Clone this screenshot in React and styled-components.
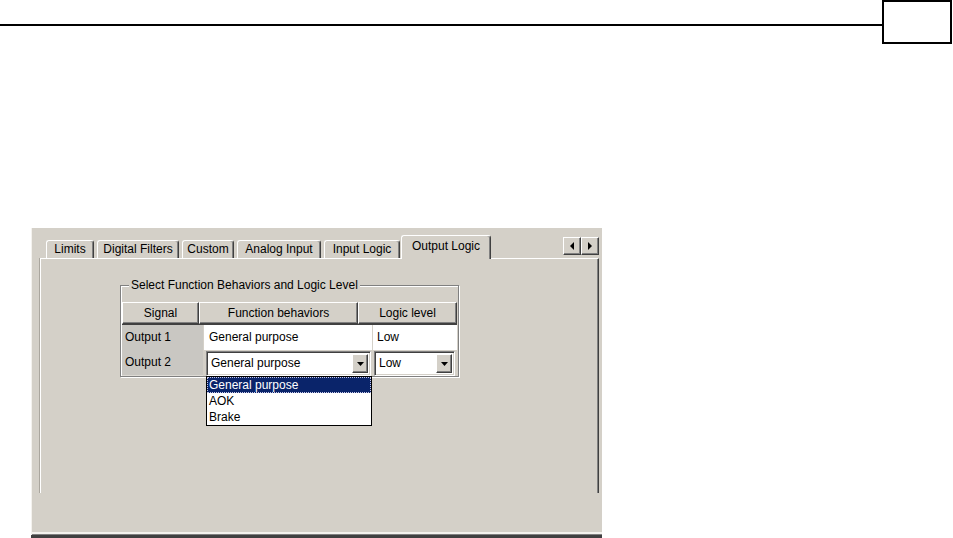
import React from "react";
import styled, { createGlobalStyle } from "styled-components";

const Global = createGlobalStyle`
  html, body { margin: 0; padding: 0; background: #fff; }
  body {
    font-family: "Liberation Sans", Arial, sans-serif;
    font-size: 12px;
    color: #000;
  }
`;

const Page = styled.div`
  width: 953px;
  height: 538px;
  overflow: hidden;
`;

const TopRule = styled.div`
  display: flex;
  align-items: flex-start;
  height: 44px;
`;

const Rule = styled.div`
  flex: 1;
  margin-top: 24px;
  border-top: 2px solid #000;
`;

const CornerBox = styled.div`
  width: 70px;
  height: 44px;
  box-sizing: border-box;
  border: 2px solid #000;
  margin-right: 1px;
`;

const Shot = styled.div`
  margin: 184px 0 0 31px;
  width: 571px;
  height: 310px;
  box-sizing: border-box;
  background: #d4d0c8;
  display: flex;
  flex-direction: column;
  border-bottom: 3px solid #404040;
  box-shadow: inset 1px 0 0 #f4f2ee, inset 0 -1px 0 #808080, inset 0 -3px 0 #f4f2ee;
`;

const TabStrip = styled.div`
  height: 30px;
  flex: none;
  display: flex;
  align-items: flex-end;
  gap: 3px;
  padding: 0 3px 0 15px;
`;

const Tab = styled.div`
  box-sizing: border-box;
  width: ${(p) => p.$w}px;
  height: ${(p) => (p.$active ? 24 : 18)}px;
  margin: ${(p) => (p.$active ? "0 -2px" : "0")};
  position: relative;
  top: ${(p) => (p.$active ? 1 : 0)}px;
  z-index: ${(p) => (p.$active ? 2 : 1)};
  background: #d4d0c8;
  border-top: 1px solid #fff;
  border-left: 1px solid #fff;
  border-right: 1px solid #404040;
  box-shadow: inset -1px 0 0 #808080;
  border-radius: 3px 3px 0 0;
  text-align: center;
  line-height: ${(p) => (p.$active ? 21 : 17)}px;
  white-space: nowrap;
`;

const ArrowGroup = styled.div`
  margin-left: auto;
  align-self: flex-start;
  margin-top: 9px;
  display: flex;
`;

const ArrowButton = styled.div`
  box-sizing: border-box;
  width: 18px;
  height: 18px;
  background: #d4d0c8;
  border-top: 1px solid #fff;
  border-left: 1px solid #fff;
  border-right: 1px solid #404040;
  border-bottom: 1px solid #404040;
  box-shadow: inset -1px -1px 0 #808080;
  display: flex;
  align-items: center;
  justify-content: center;
`;

const TabPage = styled.div`
  height: 235px;
  flex: none;
  box-sizing: border-box;
  margin: 0 3px 0 9px;
  border-top: 1px solid #fff;
  border-left: 1px solid #fff;
  border-right: 1px solid #404040;
  box-shadow: inset -1px 0 0 #808080, -1px 0 0 #aaa69e;
  padding: 26px 0 0 79px;
`;

const GroupBox = styled.div`
  position: relative;
  width: 339px;
  box-sizing: border-box;
  border: 1px solid #808080;
  box-shadow: 1px 1px 0 #fff, inset 1px 1px 0 #fff;
  padding: 16px 1px 1px 1px;
`;

const GroupTitle = styled.span`
  position: absolute;
  top: -8px;
  left: 8px;
  padding: 0 2px;
  background: #d4d0c8;
  line-height: 15px;
  white-space: nowrap;
`;

const HeaderRow = styled.div`
  display: grid;
  grid-template-columns: 77px 159px 99px;
  border-bottom: 1px solid #404040;
`;

const HeaderCell = styled.div`
  box-sizing: border-box;
  height: 22px;
  background: #d4d0c8;
  border-top: 1px solid #fff;
  border-left: 1px solid #fff;
  border-right: 1px solid #404040;
  border-bottom: 1px solid #404040;
  box-shadow: inset -1px -1px 0 #808080;
  text-align: center;
  line-height: 20px;
`;

const BodyRow = styled.div`
  display: grid;
  grid-template-columns: 81px 169px 85px;
  height: 25px;
`;

const SignalCell = styled.div`
  background: #c9c7c2;
  border-bottom: 1px solid #dedbd5;
  padding-left: 3px;
  line-height: 25px;
`;

const ValueCell = styled.div`
  background: #fff;
  border-left: 1px solid #d4d0c8;
  border-bottom: 1px solid #d4d0c8;
  padding-left: ${(p) => p.$pad}px;
  line-height: 25px;
`;

const EditCell = styled.div`
  position: relative;
  box-sizing: border-box;
  background: #d4d0c8;
  padding: ${(p) => p.$pad};
  display: flex;
`;

const Combo = styled.div`
  flex: 1;
  box-sizing: border-box;
  display: flex;
  align-items: stretch;
  background: #fff;
  border: 1px solid;
  border-color: #808080 #fff #fff #808080;
  box-shadow: inset 1px 1px 0 #404040, inset -1px -1px 0 #d4d0c8;
  padding: 2px;
`;

const ComboText = styled.span`
  flex: 1;
  padding-left: 2px;
  line-height: 18px;
`;

const DropButton = styled.div`
  box-sizing: border-box;
  width: 16px;
  background: #d4d0c8;
  border-top: 1px solid #fff;
  border-left: 1px solid #fff;
  border-right: 1px solid #404040;
  border-bottom: 1px solid #404040;
  box-shadow: inset -1px -1px 0 #808080;
  display: flex;
  align-items: center;
  justify-content: center;
`;

const DropList = styled.div`
  position: absolute;
  top: 100%;
  left: 3px;
  width: 166px;
  box-sizing: border-box;
  background: #fff;
  border: 1px solid #000;
  z-index: 5;
`;

const DropItem = styled.div`
  height: 16px;
  line-height: 16px;
  padding-left: 2px;
  background: ${(p) => (p.$sel ? "#0a246a" : "#fff")};
  color: ${(p) => (p.$sel ? "#fff" : "#000")};
  outline: ${(p) => (p.$sel ? "1px dotted #c8c8e8" : "none")};
  outline-offset: -1px;
`;

const Tri = ({ dir }) => {
  const pts = {
    down: "0,0 7,0 3.5,4",
    left: "4,0 4,8 0,4",
    right: "0,0 0,8 4,4",
  }[dir];
  const w = dir === "down" ? 7 : 4;
  const h = dir === "down" ? 4 : 8;
  return (
    <svg width={w} height={h} viewBox={`0 0 ${w} ${h}`}>
      <polygon points={pts} fill="#000" />
    </svg>
  );
};

const tabs = [
  { label: "Limits", w: 48 },
  { label: "Digital Filters", w: 82 },
  { label: "Custom", w: 52 },
  { label: "Analog Input", w: 84 },
  { label: "Input Logic", w: 76 },
  { label: "Output Logic", w: 90, active: true },
];

export default function App() {
  return (
    <Page>
      <Global />
      <TopRule>
        <Rule />
        <CornerBox />
      </TopRule>
      <Shot>
        <TabStrip>
          {tabs.map((t) => (
            <Tab key={t.label} $w={t.w} $active={t.active}>
              {t.label}
            </Tab>
          ))}
          <ArrowGroup>
            <ArrowButton>
              <Tri dir="left" />
            </ArrowButton>
            <ArrowButton>
              <Tri dir="right" />
            </ArrowButton>
          </ArrowGroup>
        </TabStrip>
        <TabPage>
          <GroupBox>
            <GroupTitle>Select Function Behaviors and Logic Level</GroupTitle>
            <HeaderRow>
              <HeaderCell>Signal</HeaderCell>
              <HeaderCell>Function behaviors</HeaderCell>
              <HeaderCell>Logic level</HeaderCell>
            </HeaderRow>
            <BodyRow>
              <SignalCell>Output 1</SignalCell>
              <ValueCell $pad={5}>General purpose</ValueCell>
              <ValueCell $pad={4}>Low</ValueCell>
            </BodyRow>
            <BodyRow>
              <SignalCell>Output 2</SignalCell>
              <EditCell $pad="1px 1px 0 3px">
                <Combo>
                  <ComboText>General purpose</ComboText>
                  <DropButton>
                    <Tri dir="down" />
                  </DropButton>
                </Combo>
                <DropList>
                  <DropItem $sel>General purpose</DropItem>
                  <DropItem>AOK</DropItem>
                  <DropItem>Brake</DropItem>
                </DropList>
              </EditCell>
              <EditCell $pad="1px 2px 0 2px">
                <Combo>
                  <ComboText>Low</ComboText>
                  <DropButton>
                    <Tri dir="down" />
                  </DropButton>
                </Combo>
              </EditCell>
            </BodyRow>
          </GroupBox>
        </TabPage>
      </Shot>
    </Page>
  );
}
